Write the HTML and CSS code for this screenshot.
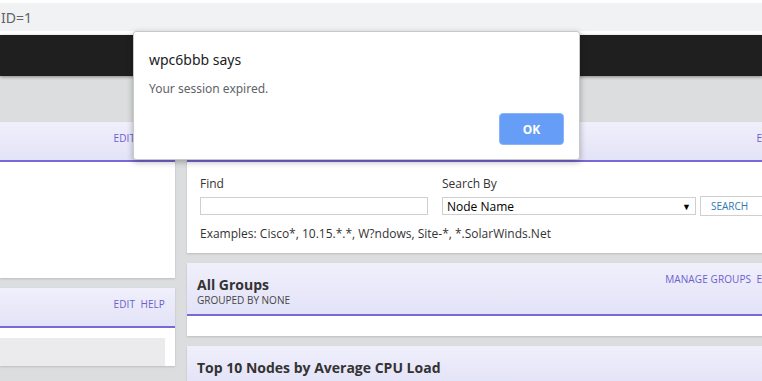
FILE: index.html
```html
<!DOCTYPE html>
<html lang="en">
<head>
<meta charset="UTF-8">
<meta name="viewport" content="width=device-width, initial-scale=1.0">
<title>Summary</title>
<link rel="stylesheet" href="styles.css">
</head>
<body>
<div class="urlbar"><span class="url">ID=1</span></div>
<div class="topnav"></div>

<div class="main">
  <div class="col-left">
    <div class="panel">
      <div class="panel-head">
        <span class="title"></span>
        <span class="links">EDIT&nbsp; HELP</span>
      </div>
      <div class="panel-body tall"></div>
    </div>
    <div class="panel">
      <div class="panel-head">
        <span class="title"></span>
        <span class="links">EDIT&nbsp; HELP</span>
      </div>
      <div class="panel-body">
        <div class="grey-box"></div>
      </div>
    </div>
  </div>

  <div class="col-right">
    <div class="panel">
      <div class="panel-head">
        <span class="title"></span>
        <span class="links">EDIT&nbsp; HELP</span>
      </div>
      <div class="panel-body search">
        <div class="search-row">
          <div class="field find">
            <label for="find">Find</label>
            <input type="text" id="find">
          </div>
          <div class="field by">
            <label>Search By</label>
            <div class="select"><span>Node Name</span><span class="arrow">&#9660;</span></div>
          </div>
          <button class="search-button">SEARCH</button>
        </div>
        <div class="examples">Examples: Cisco*, 10.15.*.*, W?ndows, Site-*, *.SolarWinds.Net</div>
      </div>
    </div>

    <div class="panel">
      <div class="panel-head groups">
        <div>
          <div class="title">All Groups</div>
          <div class="subtitle">GROUPED BY NONE</div>
        </div>
        <span class="links">MANAGE GROUPS&nbsp; EDIT&nbsp; HELP</span>
      </div>
      <div class="panel-body short"></div>
    </div>

    <div class="panel">
      <div class="panel-head">
        <div class="title">Top 10 Nodes by Average CPU Load</div>
      </div>
    </div>
  </div>
</div>

<!-- browser alert -->
<div class="alert">
  <div class="alert-title">wpc6bbb says</div>
  <div class="alert-text">Your session expired.</div>
  <div class="alert-actions">
    <button class="ok-button">OK</button>
  </div>
</div>
</body>
</html>
```

FILE: styles.css
```css
html, body {
  margin: 0;
  height: 100%;
  overflow: hidden;
}
body {
  font-family: "Open Sans", "Noto Sans", sans-serif;
  background-color: #dcdddf;
  color: #333;
  position: relative;
}
.urlbar {
  background-color: #f1f2f4;
  border-top: 3px solid #fff;
  border-bottom: 4px solid #fff;
  height: 28px;
  display: flex;
  align-items: center;
}
.url {
  font-family: "Noto Sans", sans-serif;
  font-size: 14px;
  color: #5f6368;
  margin-left: 1px;
}
.topnav {
  background-color: #1f1f1f;
  height: 41px;
  box-shadow: 0 1px 3px rgba(0, 0, 0, 0.4);
}
.main {
  display: flex;
  gap: 12px;
  padding-top: 46px;
}
.col-left {
  width: 175px;
  flex: none;
}
.col-right {
  width: 631px;
  flex: none;
}
.panel {
  background-color: #fff;
  margin-bottom: 10px;
  box-shadow: 0 1px 2px rgba(0, 0, 0, 0.15);
}
.panel-head {
  height: 38px;
  background: linear-gradient(#f0effb, #e3e3f8);
  border-bottom: 2px solid #7a68d6;
  display: flex;
  justify-content: space-between;
  align-items: flex-start;
  padding: 0 10px;
}
.panel-head .title {
  font-weight: 700;
  font-size: 14px;
  color: #333;
  padding-top: 12px;
}
.links {
  font-size: 10px;
  color: #6b5fd0;
  padding-top: 9px;
  letter-spacing: 0.1px;
  white-space: nowrap;
}
.panel-head.groups {
  height: 51px;
}
.panel-head.groups .title {
  padding-top: 12px;
  line-height: 19px;
}
.subtitle {
  font-size: 10px;
  color: #444;
  line-height: 12px;
}
.panel-body.tall {
  height: 116px;
}
.panel-body.short {
  height: 20px;
}
.grey-box {
  margin: 10px 10px 0 0;
  height: 28px;
  background-color: #ebebed;
}
.panel-body.search {
  height: 91px;
  padding: 0 13px;
  box-sizing: border-box;
}
.search-row {
  display: flex;
  align-items: flex-end;
  padding-top: 14px;
}
.field label {
  display: block;
  font-size: 12px;
  color: #333;
  margin-bottom: 5px;
  line-height: 16px;
}
.find input {
  display: block;
  width: 228px;
  height: 18px;
  box-sizing: border-box;
  border: 1px solid #cfcfcf;
  margin: 0 0 1px 0;
  padding: 0 4px;
}
.by {
  margin-left: 14px;
}
.select {
  width: 254px;
  height: 18px;
  box-sizing: border-box;
  border: 1px solid #cfcfcf;
  display: flex;
  justify-content: space-between;
  align-items: center;
  font-size: 12px;
  color: #000;
  padding: 0 4px;
  margin-bottom: 1px;
}
.arrow {
  font-size: 9px;
}
.search-button {
  display: block;
  margin-left: 4px;
  height: 20px;
  width: 70px;
  border: 1px solid #cfcfcf;
  background-color: #fff;
  color: #2e79b4;
  font-family: "Open Sans", sans-serif;
  font-size: 10px;
  text-align: left;
  padding: 0 0 0 10px;
}
.examples {
  font-size: 12px;
  color: #333;
  margin-top: 9px;
}
.alert {
  position: absolute;
  left: 133px;
  top: 31px;
  width: 447px;
  height: 129px;
  box-sizing: border-box;
  background-color: #fff;
  border: 1px solid #c9c9c9;
  border-radius: 3px;
  box-shadow: 0 2px 6px rgba(0, 0, 0, 0.3);
  padding: 18px 15px 0 15px;
  font-family: "Noto Sans", sans-serif;
}
.alert-title {
  font-size: 14px;
  color: #202124;
  line-height: 20px;
}
.alert-text {
  font-size: 12px;
  color: #5f6368;
  margin-top: 11px;
  line-height: 16px;
}
.alert-actions {
  display: flex;
  justify-content: flex-end;
  margin-top: 16px;
}
.ok-button {
  width: 65px;
  height: 32px;
  background-color: #669df6;
  border: 1px solid #8ab4f8;
  border-radius: 4px;
  color: #fff;
  font-family: "Noto Sans", sans-serif;
  font-weight: 700;
  font-size: 12px;
}
```
